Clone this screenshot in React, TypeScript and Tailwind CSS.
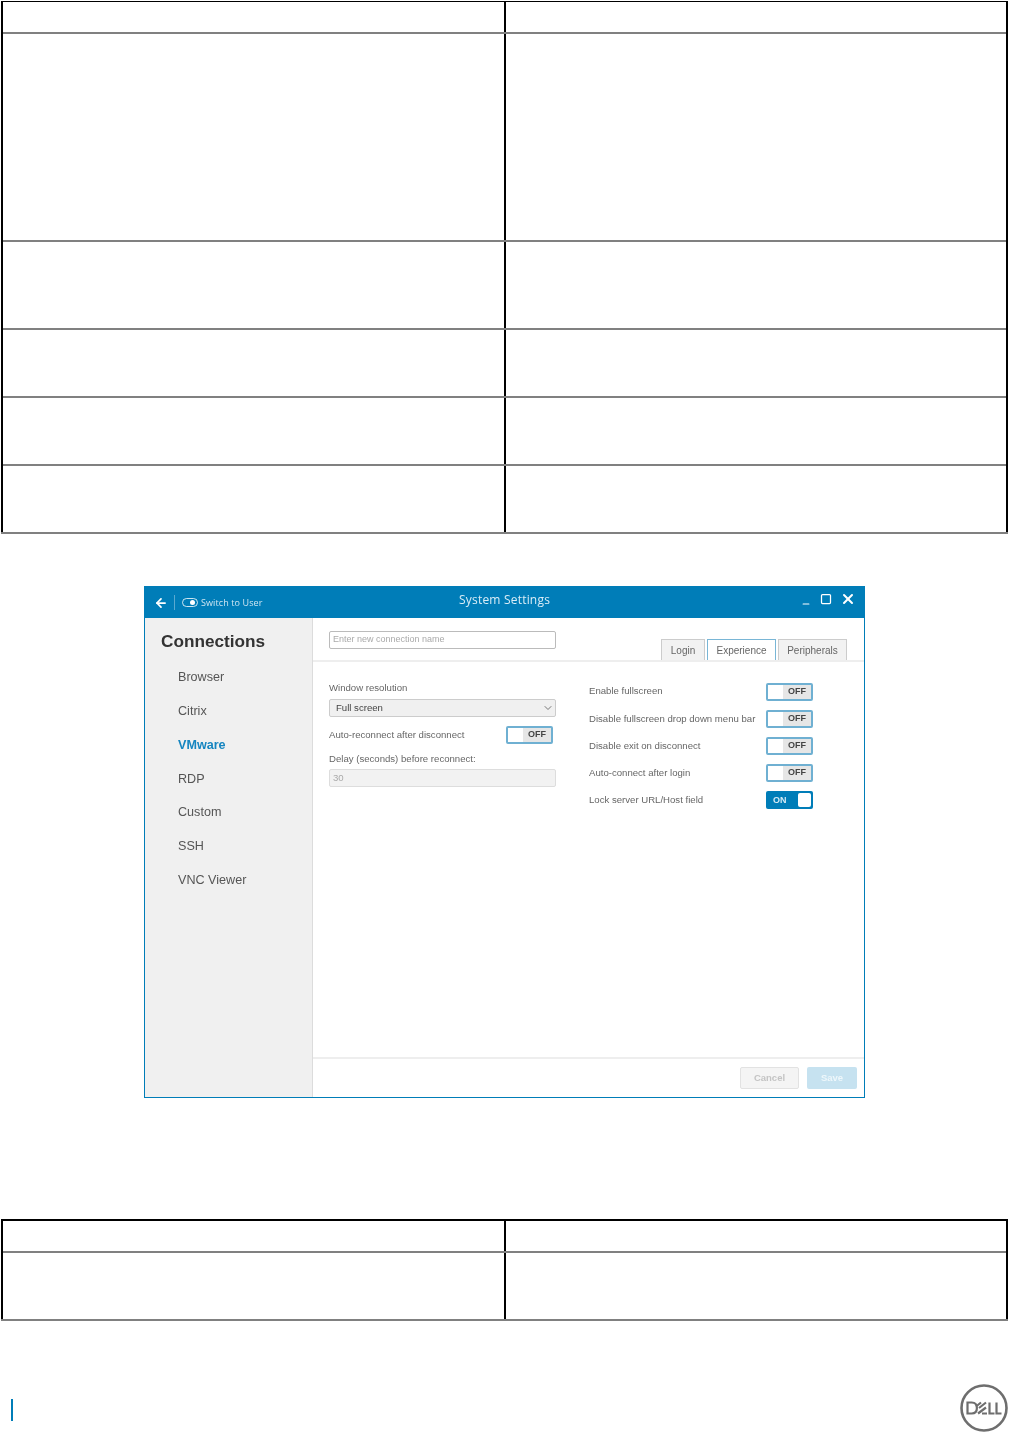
import { ArrowLeft, ChevronDown, Minus, Square, X } from "lucide-react";

const navItems = ["Browser", "Citrix", "VMware", "RDP", "Custom", "SSH", "VNC Viewer"];
const rightRows = [
  { label: "Enable fullscreen", on: false },
  { label: "Disable fullscreen drop down menu bar", on: false },
  { label: "Disable exit on disconnect", on: false },
  { label: "Auto-connect after login", on: false },
  { label: "Lock server URL/Host field", on: true },
];

const Row = ({ height, last }: { height: string; last?: boolean }) => (
  <div className={`grid grid-cols-[503px_1fr] ${height} ${last ? "" : "border-b-2 border-[#808080]"}`}>
    <div className="border-r-2 border-black" />
    <div />
  </div>
);

const Toggle = ({ on }: { on?: boolean }) =>
  on ? (
    <div className="flex h-[18px] w-[47px] items-center justify-between rounded-[2px] bg-[#007db8] pl-[7px] pr-[2px]">
      <span className="text-[9px] font-bold text-[#d5ebf5]">ON</span>
      <span className="h-[14px] w-[13px] rounded-[2px] bg-white" />
    </div>
  ) : (
    <div className="flex h-[18px] w-[47px] items-center rounded-[2px] border-2 border-[#6fb0d2] bg-[#e6e6e6]">
      <span className="h-full w-[15px] bg-white" />
      <span className="flex-1 text-center text-[9px] font-bold text-[#444]">OFF</span>
    </div>
  );

const Window = () => (
  <div className="mx-auto mt-[52px] flex h-[512px] w-[721px] flex-col border border-[#007db8] bg-white text-[#666] blur-[0.35px]">
    <div className="flex h-[31px] shrink-0 items-center bg-[#007db8] pl-[9px] pr-[8px] text-white">
      <ArrowLeft size={14} strokeWidth={3} />
      <span className="ml-[6px] mr-[7px] h-[15px] w-px bg-[#5aa9d0]" />
      <span className="flex h-[9px] w-[16px] items-center justify-end rounded-full border border-white/80 pr-[2px]">
        <span className="h-[5px] w-[5px] rounded-full bg-white" />
      </span>
      <span className="ml-[3px] w-[258px] font-['Open_Sans',sans-serif] text-[9px] tracking-[0.1px] text-[#cfe6f2]">Switch to User</span>
      <span className="mb-[5px] font-['Open_Sans',sans-serif] text-[12px] tracking-[0.2px] text-[#d9edf7]">System Settings</span>
      <div className="mb-[7px] ml-auto flex items-center">
        <Minus size={10} strokeWidth={2.5} className="mt-[9px]" />
        <Square size={12} strokeWidth={2.5} className="ml-[9px]" />
        <X size={16} strokeWidth={3} className="ml-[8px]" />
      </div>
    </div>
    <div className="flex min-h-0 flex-1">
      <div className="w-[168px] shrink-0 border-r border-[#dcdcdc] bg-[#f0f0f0] pl-[16px] pt-[11px]">
        <div className="mb-[8px] text-[17.2px] font-bold leading-[24px] text-[#333]">Connections</div>
        {navItems.map((item) => (
          <div
            key={item}
            className={`flex h-[33.75px] items-center pl-[17px] text-[12.6px] ${
              item === "VMware" ? "font-bold text-[#1585c0]" : "text-[#555]"
            }`}
          >
            {item}
          </div>
        ))}
      </div>
      <div className="flex min-w-0 flex-1 flex-col">
        <div className="flex h-[44px] shrink-0 border-b-2 border-[#eeeeee] pl-[16px] pr-[17px]">
          <div className="mt-[13px] flex h-[18px] w-[227px] items-center rounded-[2px] border border-[#bbb] pl-[3px] text-[9px] text-[#aaa]">
            Enter new connection name
          </div>
          <div className="ml-auto flex items-end gap-[2px] text-[10px] text-[#666]">
            <div className="flex h-[21px] w-[44px] items-center justify-center border border-b-0 border-[#ccc] bg-[#f2f2f2]">Login</div>
            <div className="flex h-[21px] w-[69px] items-center justify-center border border-b-0 border-[#79b6d6] bg-white">Experience</div>
            <div className="flex h-[21px] w-[69px] items-center justify-center border border-b-0 border-[#ccc] bg-[#f2f2f2]">Peripherals</div>
          </div>
        </div>
        <div className="flex flex-1 pl-[16px]">
          <div className="w-[227px] shrink-0 pt-[19px] text-[9.6px] text-[#666]">
            <div className="leading-[13px]">Window resolution</div>
            <div className="mt-[5px] flex h-[18px] items-center justify-between rounded-[2px] border border-[#ccc] bg-[#f0f0f0] pl-[6px] pr-[1px] text-[#444]">
              Full screen
              <ChevronDown size={12} strokeWidth={2} className="text-[#777]" />
            </div>
            <div className="mt-[9px] flex items-center justify-between pr-[3px]">
              <span>Auto-reconnect after disconnect</span>
              <Toggle />
            </div>
            <div className="mt-[8px] leading-[13px]">Delay (seconds) before reconnect:</div>
            <div className="mt-[4px] flex h-[18px] items-center rounded-[2px] border border-[#ddd] bg-[#f2f2f2] pl-[3px] text-[#aaa]">30</div>
          </div>
          <div className="ml-[33px] w-[224px] pt-[16px] text-[9.6px] text-[#666]">
            {rightRows.map((row) => (
              <div key={row.label} className="flex h-[27.2px] items-center justify-between">
                <span>{row.label}</span>
                <Toggle on={row.on} />
              </div>
            ))}
          </div>
        </div>
        <div className="flex h-[40px] shrink-0 items-center justify-end gap-[8px] border-t-2 border-[#eeeeee] pr-[7px]">
          <div className="flex h-[22px] w-[59px] items-center justify-center rounded-[2px] border border-[#e2e2e2] bg-[#f4f4f4] text-[9.5px] font-bold text-[#c4c4c4]">Cancel</div>
          <div className="flex h-[22px] w-[50px] items-center justify-center rounded-[2px] bg-[#c6e2f0] text-[9.5px] font-bold text-[#eef7fb]">Save</div>
        </div>
      </div>
    </div>
  </div>
);

const DellLogo = () => (
  <svg width="48" height="48" viewBox="0 0 48 48" fill="none" stroke="#6e6e6e">
    <circle cx="24" cy="24" r="22.5" strokeWidth="2.6" />
    <path d="M7.5 18.5v11h4.2c3.4 0 5.2-2.3 5.2-5.5s-1.8-5.500-5.200-5.500z" strokeWidth="2.2" />
    <path d="M21 18.500l-5 4M18 29.500l8-6M19 24l7-5.500M22 29.500h5" strokeWidth="2.2" />
    <path d="M29.500 18.500v11h5M36.500 18.500v11h5" strokeWidth="2.2" />
  </svg>
);

export default function App() {
  return (
    <div className="relative h-[1433px] w-[1009px] overflow-hidden bg-white font-['Liberation_Sans',sans-serif]">
      <div className="ml-[1px] mt-[1px] w-[1007px]">
        <div className="border-x-2 border-t border-black">
          <Row height="h-[32px]" />
          <Row height="h-[208px]" />
          <Row height="h-[88px]" />
          <Row height="h-[68px]" />
          <Row height="h-[68px]" />
          <Row height="h-[66px]" last />
        </div>
        <div className="h-[2px] bg-[#808080]" />
      </div>
      <Window />
      <div className="ml-[1px] mt-[121px] w-[1007px]">
        <div className="border-x-2 border-t-2 border-black">
          <Row height="h-[32px]" />
          <Row height="h-[66px]" last />
        </div>
        <div className="h-[2px] bg-[#808080]" />
      </div>
      <div className="absolute left-[11px] top-[1399px] h-[22px] w-[2px] bg-[#007db8]" />
      <div className="absolute left-[960px] top-[1384px]">
        <DellLogo />
      </div>
    </div>
  );
}
